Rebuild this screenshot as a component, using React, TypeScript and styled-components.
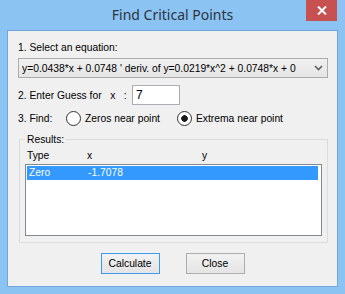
import styled, { createGlobalStyle } from 'styled-components';

const GlobalStyle = createGlobalStyle`
  html, body {
    margin: 0;
    padding: 0;
    background: #ffffff;
  }
  * {
    box-sizing: border-box;
  }
`;

const Frame = styled.div`
  width: 345px;
  height: 294px;
  background: #8bc3f2;
  display: flex;
  flex-direction: column;
  padding: 0 7px 7px;
  font-family: 'Liberation Sans', Arial, sans-serif;
  font-size: 10.3px;
  color: #000;
`;

const TitleBar = styled.div`
  height: 30px;
  display: grid;
  grid-template-columns: 1fr auto 1fr;
  align-items: start;
  margin: 0 -7px;
`;

const Title = styled.div`
  grid-column: 2;
  font-family: 'Noto Sans', 'Open Sans', sans-serif;
  font-size: 14px;
  line-height: 30px;
  color: #2d3340;
`;

const CloseButton = styled.div`
  grid-column: 3;
  justify-self: end;
  width: 31px;
  height: 21px;
  margin-right: 8px;
  background: #c75050;
  display: flex;
  align-items: center;
  justify-content: center;
`;

const Client = styled.div`
  flex: 1;
  background: #f0f0f0;
  border: 1px solid #6fa6dc;
  padding: 10px 9px 0 10px;
  display: flex;
  flex-direction: column;
`;

const Label = styled.div`
  line-height: 13px;
  height: 13px;
  white-space: pre;
`;

const Combo = styled.div`
  margin-top: 4px;
  height: 20px;
  border: 1px solid #acacac;
  background: linear-gradient(#f0f0f0, #e5e5e5);
  display: flex;
  align-items: center;
  padding: 0 0 0 3px;
`;

const ComboText = styled.div`
  flex: 1;
  white-space: nowrap;
  overflow: hidden;
  line-height: 13px;
`;

const ComboArrow = styled.div`
  width: 17px;
  display: flex;
  align-items: center;
  justify-content: center;
`;

const Row = styled.div<{ top: number; h: number }>`
  margin-top: ${(p) => p.top}px;
  height: ${(p) => p.h}px;
  display: flex;
  align-items: center;
`;

const TextBox = styled.div`
  width: 48px;
  height: 20px;
  border: 1px solid #abadb3;
  background: #fff;
  margin-left: auto;
  margin-right: 148px;
  padding-left: 3px;
  line-height: 18px;
  font-size: 12px;
`;

const FindLabel = styled(Label)`
  width: 48px;
`;

const Radio = styled.div<{ checked?: boolean }>`
  display: flex;
  align-items: center;
  gap: 4px;
  margin-left: ${(p) => (p.checked ? 17 : 0)}px;
  &::before {
    content: '';
    width: 13px;
    height: 13px;
    border-radius: 50%;
    border: 1px solid #333;
    background: ${(p) =>
      p.checked
        ? 'radial-gradient(circle, #1a1a1a 0 3px, #fff 3.5px)'
        : '#fff'};
  }
`;

const Group = styled.fieldset`
  margin: 7px 0 0 1px;
  padding: 0 5px 6px;
  border: 1px solid #dcdcdc;
  border-radius: 0;
  min-width: 0;
`;

const Legend = styled.legend`
  padding: 0 2px;
  margin-left: 0;
  line-height: 13px;
`;

const Columns = styled.div`
  display: grid;
  grid-template-columns: 60px 115px 1fr;
  padding-left: 2px;
  line-height: 13px;
  height: 13px;
  margin-top: 3px;
`;

const ListBox = styled.div`
  margin-top: 2px;
  height: 72px;
  border: 1px solid #828790;
  background: #fff;
  padding: 1px;
`;

const ListRow = styled.div<{ selected?: boolean }>`
  display: grid;
  grid-template-columns: 59px 1fr;
  height: 14px;
  line-height: 14px;
  padding-left: 2px;
  margin-right: 2px;
  background: ${(p) => (p.selected ? '#3399ff' : 'transparent')};
  color: ${(p) => (p.selected ? '#fff' : '#000')};
`;

const Buttons = styled.div`
  display: flex;
  justify-content: center;
  gap: 26px;
  margin-top: 10px;
  padding-right: 1px;
`;

const Button = styled.div<{ primary?: boolean }>`
  width: 59px;
  height: 21px;
  border: 1px solid ${(p) => (p.primary ? '#3c9aee' : '#adadad')};
  background: linear-gradient(#f2f2f2, #e4e4e4);
  display: flex;
  align-items: center;
  justify-content: center;
`;

export default function App() {
  return (
    <>
      <GlobalStyle />
      <Frame>
        <TitleBar>
          <Title>Find Critical Points</Title>
          <CloseButton>
            <svg width="10" height="9" viewBox="0 0 10 9">
              <path d="M1 0.5 L9 8.5 M9 0.5 L1 8.5" stroke="#fff" strokeWidth="2" />
            </svg>
          </CloseButton>
        </TitleBar>
        <Client>
          <Label>1. Select an equation:</Label>
          <Combo>
            <ComboText>y=0.0438*x + 0.0748 ' deriv. of y=0.0219*x^2 + 0.0748*x + 0</ComboText>
            <ComboArrow>
              <svg width="9" height="6" viewBox="0 0 9 6">
                <path d="M1 1 L4.5 4.5 L8 1" fill="none" stroke="#606060" strokeWidth="1.6" />
              </svg>
            </ComboArrow>
          </Combo>
          <Row top={7} h={20}>
            <Label>{'2. Enter Guess for   x   :'}</Label>
            <TextBox>7</TextBox>
          </Row>
          <Row top={5} h={16}>
            <FindLabel>3. Find:</FindLabel>
            <Radio>Zeros near point</Radio>
            <Radio checked>Extrema near point</Radio>
          </Row>
          <Group>
            <Legend>Results:</Legend>
            <Columns>
              <span>Type</span>
              <span>x</span>
              <span>y</span>
            </Columns>
            <ListBox>
              <ListRow selected>
                <span>Zero</span>
                <span>-1.7078</span>
              </ListRow>
            </ListBox>
          </Group>
          <Buttons>
            <Button primary>Calculate</Button>
            <Button>Close</Button>
          </Buttons>
        </Client>
      </Frame>
    </>
  );
}
